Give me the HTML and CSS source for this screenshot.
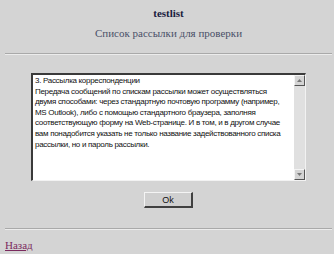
FILE: index.html
```html
<!DOCTYPE html>
<html lang="ru">
<head>
<meta charset="utf-8">
<title>testlist</title>
<link rel="stylesheet" href="styles.css">
</head>
<body>
<h1 class="title">testlist</h1>
<p class="subtitle">Список рассылки для проверки</p>
<hr class="rule rule-top">
<div class="panel">
  <div class="textbox">
    <div class="text">3. Рассылка корреспонденции<br>Передача сообщений по спискам рассылки может осуществляться двумя способами: через стандартную почтовую программу (например, MS Outlook), либо с помощью стандартного браузера, заполняя соответствующую форму на Web-странице. И в том, и в другом случае вам понадобится указать не только название задействованного списка рассылки, но и пароль рассылки.</div>
    <div class="scrollbar">
      <span class="sb-btn"><svg width="5" height="3" viewBox="0 0 5 3"><path d="M0 3h5L2.5 0z" fill="#777"/></svg></span>
      <span class="sb-track"></span>
      <span class="sb-btn"><svg width="5" height="3" viewBox="0 0 5 3"><path d="M0 0h5L2.5 3z" fill="#777"/></svg></span>
    </div>
  </div>
  <button class="ok" type="button">Ok</button>
</div>
<hr class="rule rule-bottom">
<a class="back" href="#">Назад</a>
</body>
</html>
```
FILE: styles.css
```css
html, body {
  background: #d4d4d4;
}
body {
  margin: 0;
  padding: 6px 2px 0 5px;
  font-family: "Liberation Serif", "Times New Roman", serif;
}
.title {
  margin: 0;
  text-align: center;
  font-size: 11px;
  line-height: 15px;
  font-weight: bold;
  color: #1a2040;
}
.subtitle {
  margin: 5px 0 0;
  text-align: center;
  font-size: 11px;
  font-weight: normal;
  line-height: 15px;
  color: #4a5068;
}
.rule {
  border: 0;
  height: 1px;
  background: #a9a9a9;
  border-bottom: 1px solid #ececec;
  margin: 0;
}
.rule-top {
  margin-top: 12px;
}
.panel {
  display: flex;
  flex-direction: column;
  align-items: center;
  padding-top: 18px;
}
.textbox {
  display: flex;
  width: 275px;
  height: 108px;
  box-sizing: border-box;
  background: #fff;
  border-top: 2px solid #3a3a3a;
  border-left: 2px solid #3a3a3a;
  border-right: 1px solid #f2f2f2;
  border-bottom: 1px solid #f2f2f2;
}
.text {
  flex: 1;
  padding: 1px 7px 1px 2px;
  font-family: "Liberation Sans", Arial, sans-serif;
  font-size: 8px;
  letter-spacing: -0.3px;
  line-height: 10.6px;
  color: #111;
  overflow: hidden;
}
.scrollbar {
  width: 11px;
  display: flex;
  flex-direction: column;
  background: #e0e0e0;
}
.sb-btn {
  height: 11px;
  box-sizing: border-box;
  background: #d4d4d4;
  border-top: 1px solid #f4f4f4;
  border-left: 1px solid #f4f4f4;
  border-right: 1px solid #555;
  border-bottom: 1px solid #555;
  display: flex;
  align-items: center;
  justify-content: center;
}
.sb-track {
  flex: 1;
}
.ok {
  margin-top: 11px;
  width: 49px;
  height: 16px;
  padding: 0;
  background: #cfcfcf;
  border-top: 1px solid #f4f4f4;
  border-left: 1px solid #f4f4f4;
  border-right: 2px solid #404040;
  border-bottom: 2px solid #404040;
  font-family: "Liberation Sans", Arial, sans-serif;
  font-size: 9px;
  color: #111;
}
.rule-bottom {
  margin-top: 20px;
}
.back {
  display: inline-block;
  margin-top: 9px;
  font-size: 11px;
  color: #7a2a5e;
}
```
